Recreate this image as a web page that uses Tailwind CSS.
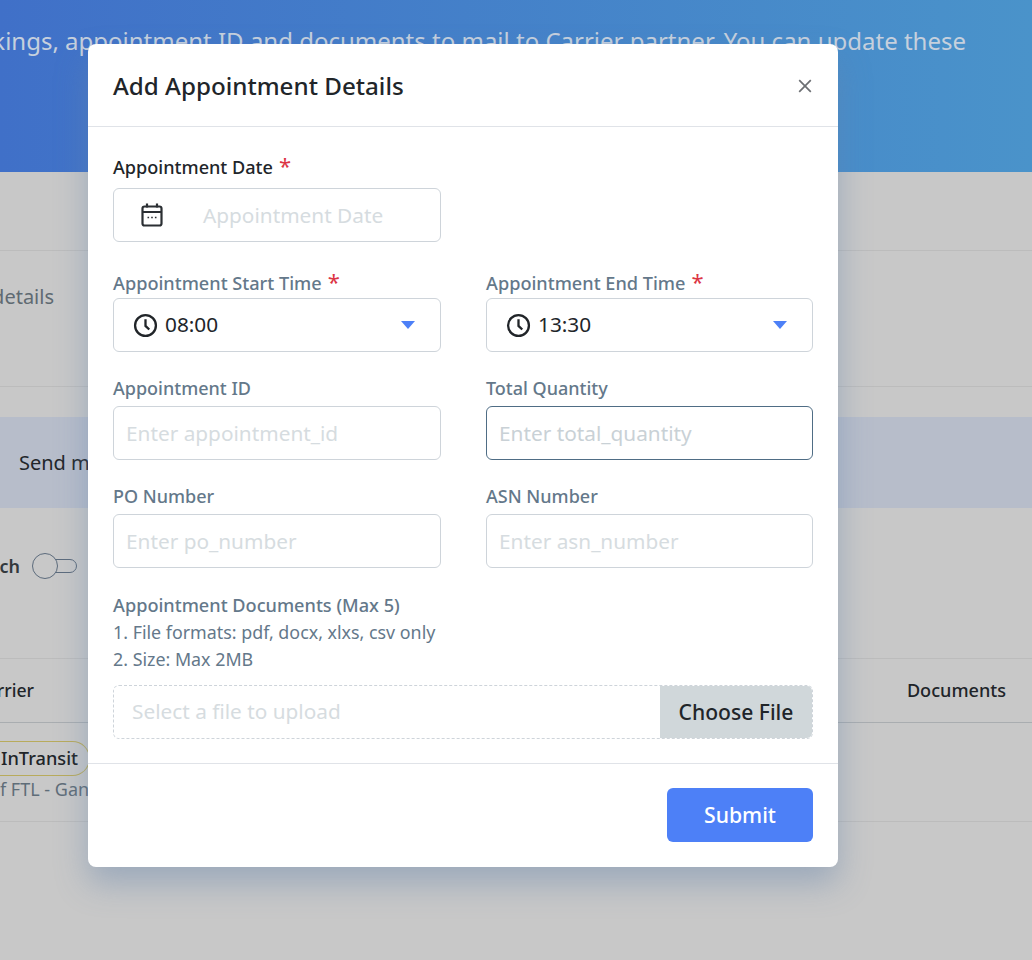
<!DOCTYPE html>
<html>
<head>
<meta charset="utf-8">
<script src="https://cdn.jsdelivr.net/npm/@tailwindcss/browser@4"></script>
</head>
<body class="m-0">
<div class="relative w-[1032px] h-[960px] overflow-hidden bg-[#c8c8c8] font-['Noto_Sans','Open_Sans',sans-serif]">
  <!-- page behind -->
  <div class="h-[172px] bg-gradient-to-r from-[#4070c8] to-[#4a93ca] flex justify-end pr-[66px] pt-[25px] whitespace-nowrap">
    <span class="text-[24px] leading-[32px] text-[#c6d0dd]">kings, appointment ID and documents to mail to Carrier partner. You can update these</span>
  </div>
  <div class="h-[79px] border-b border-[#bcbcbc]"></div>
  <div class="h-[136px] border-b border-[#bcbcbc] pt-[31px] whitespace-nowrap">
    <div class="w-[54px] flex justify-end"><span class="text-[20px] leading-[30px] text-[#5f6a72]">details</span></div>
  </div>
  <div class="h-[91px] mt-[30px] bg-[#b7bdca] flex items-center pl-[19px] whitespace-nowrap">
    <span class="text-[20px] text-[#22262a]">Send mail</span>
  </div>
  <div class="h-[151px] border-b border-[#bcbcbc] flex items-start pt-[44px] whitespace-nowrap">
    <div class="w-[20px] flex justify-end"><span class="text-[18px] leading-[28px] font-semibold text-[#33393d]">ch</span></div>
    <div class="relative ml-[12px] mt-[1px] w-[46px] h-[26px] flex items-center">
      <div class="absolute left-[12px] top-[6px] w-[33px] h-[14px] rounded-full border border-[#5c6b7c]"></div>
      <div class="absolute left-0 top-0 w-[26px] h-[26px] rounded-full border border-[#5c6b7c] bg-[#c8c8c8]"></div>
    </div>
  </div>
  <div class="h-[64px] border-b border-[#a9adb0] flex items-center justify-between pr-[26px] whitespace-nowrap">
    <div class="w-[34px] flex justify-end"><span class="text-[17.6px] font-medium text-[#202428]">rrier</span></div>
    <span class="text-[18.1px] font-medium text-[#202428]">Documents</span>
  </div>
  <div class="h-[99px] border-b border-[#bcbcbc] pt-[18px] whitespace-nowrap">
    <div class="w-[90px] h-[35px] rounded-r-full border border-l-0 border-[#b8ab5c] flex items-center pl-[1px]">
      <span class="text-[18.2px] font-medium text-[#202428]">InTransit</span>
    </div>
    <div class="w-[100px] flex mt-[1px] overflow-hidden"><span class="text-[18px] leading-[24px] text-[#5f6d78]">f FTL - Gand</span></div>
  </div>

  <!-- modal -->
  <div class="absolute left-[88px] top-[44px] w-[750px] h-[823px] bg-white rounded-[8px] shadow-[0_16px_32px_rgba(100,130,170,0.45)] flex flex-col">
    <div class="h-[83px] shrink-0 border-b border-[#e0e3e8] flex items-center justify-between pl-[25px] pr-[26px]">
      <h2 class="mt-[1px] text-[24.2px] font-medium text-[#212529] leading-[30px]">Add Appointment Details</h2>
      <svg class="mt-[1px]" width="14" height="14" viewBox="0 0 14 14" fill="none" stroke="#6c6f73" stroke-width="1.7"><path d="M1.2 1.2 12.8 12.8M12.8 1.2 1.2 12.8"/></svg>
    </div>
    <div class="flex-1 px-[25px] pt-[26px]">
      <div class="grid grid-cols-[328px_327px] gap-x-[45px]">
        <div>
          <label class="flex h-[28px] text-[18.1px] font-medium leading-[28px] text-[#212529]">Appointment Date<span class="ml-[6px] text-[#dc3545] text-[22px] leading-[24px] font-normal">*</span></label>
          <div class="mt-[7px] h-[54px] rounded-[6px] border border-[#ced4da] flex items-center pl-[27px]">
            <svg width="22" height="24" viewBox="0 0 22 24" fill="none" stroke="#2b2f33" stroke-width="2.2"><rect x="1.5" y="3.5" width="19" height="19" rx="2"/><path d="M1.5 9h19M6 .5v4M16 .5v4"/><path d="M6.5 14.5h1.6M10.2 14.5h1.6M13.9 14.5h1.6" stroke-width="1.6"/></svg>
            <span class="ml-[40px] pt-[2px] text-[20.8px] text-[#d6dce0]">Appointment Date</span>
          </div>
        </div>
        <div></div>
        <div class="mt-[27px]">
          <label class="flex h-[28px] text-[18.15px] font-medium leading-[28px] text-[#64788a]">Appointment Start Time<span class="ml-[6px] text-[#dc3545] text-[22px] leading-[24px] font-normal">*</span></label>
          <div class="mt-[1px] h-[54px] rounded-[6px] border border-[#ced4da] flex items-center pl-[19px] pr-[25px]">
            <svg width="25" height="25" viewBox="0 0 24 24" fill="none" stroke="#212529" stroke-width="2.2"><circle cx="12" cy="12" r="10"/><path d="M12 6v6.4l3.6 3.4"/></svg>
            <span class="ml-[7px] text-[20.8px] text-[#212529]">08:00</span>
            <svg class="ml-auto" width="14" height="8" viewBox="0 0 14 8"><path d="M0 0h14L7 8z" fill="#4d80f7"/></svg>
          </div>
        </div>
        <div class="mt-[27px]">
          <label class="flex h-[28px] text-[18.15px] font-medium leading-[28px] text-[#64788a]">Appointment End Time<span class="ml-[6px] text-[#dc3545] text-[22px] leading-[24px] font-normal">*</span></label>
          <div class="mt-[1px] h-[54px] rounded-[6px] border border-[#ced4da] flex items-center pl-[19px] pr-[25px]">
            <svg width="25" height="25" viewBox="0 0 24 24" fill="none" stroke="#212529" stroke-width="2.2"><circle cx="12" cy="12" r="10"/><path d="M12 6v6.4l3.6 3.4"/></svg>
            <span class="ml-[7px] text-[20.8px] text-[#212529]">13:30</span>
            <svg class="ml-auto" width="14" height="8" viewBox="0 0 14 8"><path d="M0 0h14L7 8z" fill="#4d80f7"/></svg>
          </div>
        </div>
        <div class="mt-[22px]">
          <label class="block h-[28px] text-[18px] font-medium leading-[28px] text-[#64788a]">Appointment ID</label>
          <div class="mt-[4px] h-[54px] rounded-[6px] border border-[#ced4da] flex items-center pl-[12px]"><span class="pt-[2px] text-[20.8px] text-[#d6dce0]">Enter appointment_id</span></div>
        </div>
        <div class="mt-[22px]">
          <label class="block h-[28px] text-[18px] font-medium leading-[28px] text-[#64788a]">Total Quantity</label>
          <div class="mt-[4px] h-[54px] rounded-[6px] border border-[#4f6d85] flex items-center pl-[12px]"><span class="pt-[2px] text-[20.8px] text-[#c9d1d6]">Enter total_quantity</span></div>
        </div>
        <div class="mt-[22px]">
          <label class="block h-[28px] text-[18px] font-medium leading-[28px] text-[#64788a]">PO Number</label>
          <div class="mt-[4px] h-[54px] rounded-[6px] border border-[#ced4da] flex items-center pl-[12px]"><span class="pt-[2px] text-[20.8px] text-[#d6dce0]">Enter po_number</span></div>
        </div>
        <div class="mt-[22px]">
          <label class="block h-[28px] text-[18px] font-medium leading-[28px] text-[#64788a]">ASN Number</label>
          <div class="mt-[4px] h-[54px] rounded-[6px] border border-[#ced4da] flex items-center pl-[12px]"><span class="pt-[2px] text-[20.8px] text-[#d6dce0]">Enter asn_number</span></div>
        </div>
      </div>
      <div class="mt-[24px] text-[17.85px] leading-[27px] text-[#64788a]">
        <div class="font-medium text-[18.15px]">Appointment Documents (Max 5)</div>
        <div>1. File formats: pdf, docx, xlxs, csv only</div>
        <div>2. Size: Max 2MB</div>
      </div>
      <div class="mt-[12px] w-[700px] h-[54px] rounded-[6px] border border-dashed border-[#ced4da] flex items-stretch overflow-hidden">
        <div class="flex-1 flex items-center pl-[18px]"><span class="text-[20.8px] text-[#d6dce0]">Select a file to upload</span></div>
        <div class="w-[152px] bg-[#d0d7da] flex items-center justify-center"><span class="text-[21.1px] font-medium text-[#212529]">Choose File</span></div>
      </div>
    </div>
    <div class="h-[104px] shrink-0 border-t border-[#e0e3e8] flex justify-end pt-[24px] pr-[25px]">
      <button class="w-[146px] h-[54px] rounded-[6px] bg-[#4d80f7] text-white text-[21.2px] font-medium">Submit</button>
    </div>
  </div>
</div>
</body>
</html>
